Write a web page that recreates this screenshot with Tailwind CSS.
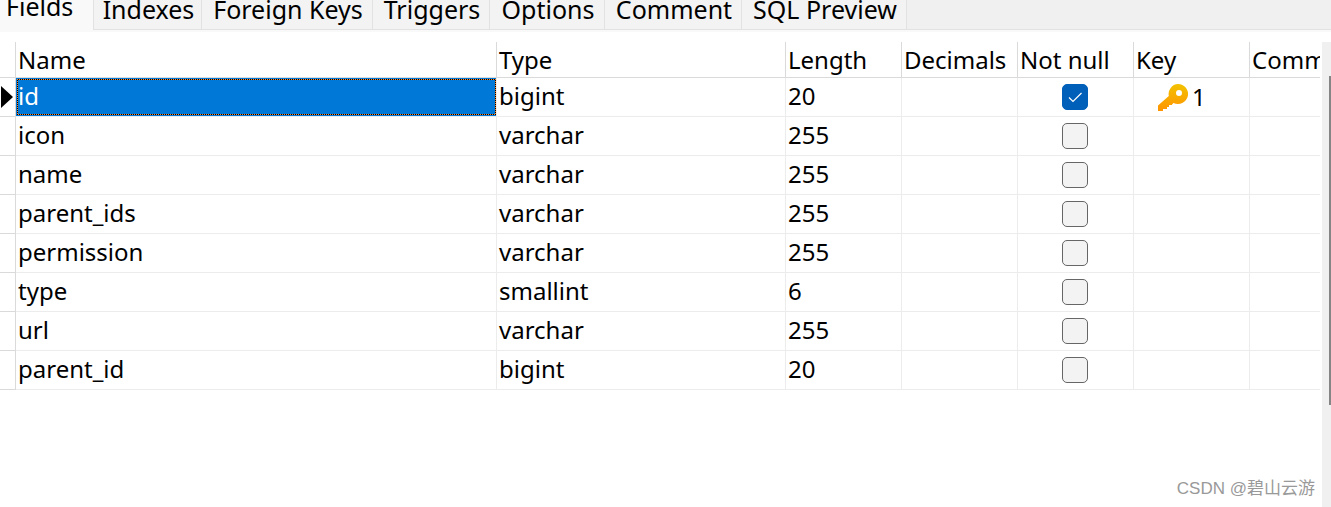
<!DOCTYPE html>
<html lang="en">
<head>
    <meta charset="UTF-8">
    <meta name="viewport" content="width=device-width, initial-scale=1.0">
    <title>Table Designer</title>
    <script src="https://cdn.jsdelivr.net/npm/@tailwindcss/browser@4"></script>
</head>
<body class="flex min-h-screen flex-col overflow-hidden bg-white font-['Noto_Sans','Open_Sans',sans-serif] text-[24px] leading-8 text-black">
    <!-- Tabs -->
    <nav class="flex h-8 items-start overflow-hidden border-b-2 border-[#f9f9f9] bg-[#f0f0f0] text-[25px] leading-7 whitespace-nowrap">
        <button class="-mt-2 h-10 w-[93px] shrink-0 bg-[#f9f9f9] pb-3 pl-[6px] text-left">Fields</button>
        <div class="flex h-[30px] flex-1 items-end border-b border-l border-[#e2e2e2]">
            <button class="h-10 w-[108px] shrink-0 border-r border-[#e2e2e2] bg-[#f3f3f3] py-[6px] pl-[2px]">Indexes</button>
            <button class="h-10 w-[171px] shrink-0 border-r border-[#e2e2e2] bg-[#f3f3f3] py-[6px] pl-[2px]">Foreign Keys</button>
            <button class="h-10 w-[117px] shrink-0 border-r border-[#e2e2e2] bg-[#f3f3f3] py-[6px] pl-[2px]">Triggers</button>
            <button class="h-10 w-[115px] shrink-0 border-r border-[#e2e2e2] bg-[#f3f3f3] py-[6px] pl-[2px]">Options</button>
            <button class="h-10 w-[137px] shrink-0 border-r border-[#e2e2e2] bg-[#f3f3f3] py-[6px] pl-[2px]">Comment</button>
            <button class="h-10 w-[165px] shrink-0 border-r border-[#e2e2e2] bg-[#f3f3f3] py-[6px] pl-[2px]">SQL Preview</button>
        </div>
    </nav>

    <main class="flex flex-1 pt-[10px]">
        <div class="min-w-0 flex-1 pr-[2px]">
            <table class="w-full table-fixed border-separate border-spacing-0 text-left whitespace-nowrap [&_td]:h-[39px] [&_td]:border-r [&_td]:border-b [&_td]:border-[#ececec] [&_td]:px-[2px] [&_td:first-child]:border-[#dadada] [&_td:last-child]:border-r-0 [&_th]:h-9 [&_th]:border-r [&_th]:border-b [&_th]:border-[#dadada] [&_th]:px-[2px] [&_th]:py-0 [&_th]:font-normal [&_th:last-child]:border-r-0">
                <colgroup>
                    <col class="w-4">
                    <col class="w-[481px]">
                    <col class="w-[289px]">
                    <col class="w-[116px]">
                    <col class="w-[116px]">
                    <col class="w-[116px]">
                    <col class="w-[116px]">
                    <col>
                </colgroup>
                <thead>
                    <tr>
                        <th></th>
                        <th>Name</th>
                        <th>Type</th>
                        <th>Length</th>
                        <th>Decimals</th>
                        <th>Not null</th>
                        <th>Key</th>
                        <th class="overflow-hidden">Comment</th>
                    </tr>
                </thead>
                <tbody id="fields"></tbody>
            </table>
        </div>

        <!-- Scrollbar -->
        <div class="flex w-[9px] flex-col items-end bg-[#f0f0f0] pt-[34px]">
            <div class="h-[329px] w-[2px] bg-[#858585]"></div>
        </div>
    </main>

    <div class="absolute right-4 bottom-1 font-['Liberation_Sans','Noto_Sans_CJK_SC',sans-serif] text-[17px] leading-7 text-[#999999]">CSDN @碧山云游</div>

    <script>
        const fields = [
            { name: 'id', type: 'bigint', length: 20, notNull: true, key: 1 },
            { name: 'icon', type: 'varchar', length: 255 },
            { name: 'name', type: 'varchar', length: 255 },
            { name: 'parent_ids', type: 'varchar', length: 255 },
            { name: 'permission', type: 'varchar', length: 255 },
            { name: 'type', type: 'smallint', length: 6 },
            { name: 'url', type: 'varchar', length: 255 },
            { name: 'parent_id', type: 'bigint', length: 20 }
        ];

        // Marker for the current row
        const marker = `<svg class="-ml-[1px] block" width="12" height="22" viewBox="0 0 12 22"><path d="M0 0L12 11L0 22Z" fill="#000"/></svg>`;

        const keyIcon = `<svg class="block" width="32" height="28" viewBox="0 0 32 28">
            <defs><linearGradient id="gold" x1="0" y1="0" x2="0" y2="1"><stop offset="0" stop-color="#f2c200"/><stop offset="1" stop-color="#ff9400"/></linearGradient></defs>
            <path fill="url(#gold)" fill-rule="evenodd" d="M21 1a10 10 0 1 1-4.500 18.900L15 21.500V22h-3v2h-2v2H6v2H1v-5.500L11.800 13A10 10 0 0 1 21 1ZM22 7a3 3 0 1 0 0 6a3 3 0 0 0 0-6Z"/>
        </svg>`;

        document.getElementById('fields').innerHTML = fields.map((f, i) => `
            <tr>
                <td>${i === 0 ? marker : ''}</td>
                ${i === 0
                    ? `<td class="bg-[#0078d7] text-white"><div class="-mr-[2px] -ml-[1px] h-9 bg-[repeating-conic-gradient(#000_0_25%,#ff8728_0_50%)] bg-[length:2px_2px] p-px"><div class="h-full bg-[#0078d7] leading-8">${f.name}</div></div></td>`
                    : `<td class="pb-[3px]">${f.name}</td>`}
                <td class="pb-[3px]">${f.type}</td>
                <td class="pb-[3px]">${f.length}</td>
                <td></td>
                <td>
                    <span class="grid place-items-center pr-[2px]">
                        <input type="checkbox" aria-label="${f.name} not null" ${f.notNull ? 'checked' : ''} class="peer col-start-1 row-start-1 size-[26px] appearance-none rounded-[5px] border border-[#666666] bg-[#f3f3f3] checked:border-[#005fb8] checked:bg-[#005fb8]">
                        <svg class="pointer-events-none invisible col-start-1 row-start-1 peer-checked:visible" width="26" height="26" viewBox="0 0 26 26" fill="none"><path d="M7 13.500L11 17.500L19.500 9" stroke="#fff" stroke-width="1.200"/></svg>
                    </span>
                </td>
                <td>${f.key ? `<span class="flex items-center gap-[3px] pl-[21px]">${keyIcon}${f.key}</span>` : ''}</td>
                <td></td>
            </tr>`).join('');
    </script>
</body>
</html>
